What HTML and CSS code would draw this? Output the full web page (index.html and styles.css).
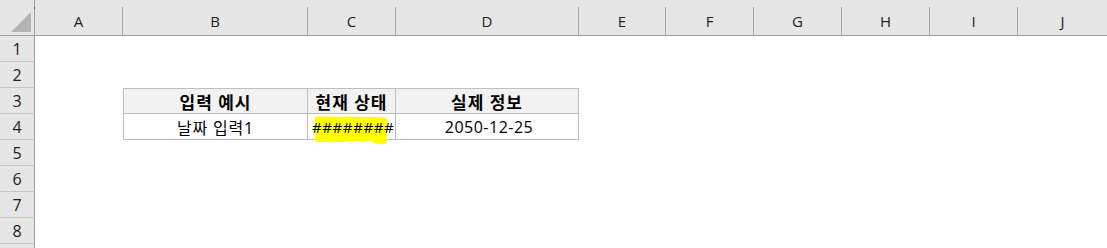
FILE: index.html
```html
<!DOCTYPE html>
<html lang="ko">
<head>
<meta charset="utf-8">
<link rel="stylesheet" href="styles.css">
</head>
<body>
<div class="sheet">
  <div class="corner"><svg class="tri" width="22" height="22" viewBox="0 0 22 22"><polygon points="1,21 21,21 21,1" fill="#b4b4b4"/></svg></div>
  <div class="ch"><span>A</span></div>
  <div class="ch"><span>B</span></div>
  <div class="ch"><span>C</span></div>
  <div class="ch"><span>D</span></div>
  <div class="ch"><span>E</span></div>
  <div class="ch"><span>F</span></div>
  <div class="ch"><span>G</span></div>
  <div class="ch"><span>H</span></div>
  <div class="ch"><span>I</span></div>
  <div class="ch last"><span>J</span></div>

  <div class="rh">1</div><div class="blank row-span"></div>
  <div class="rh">2</div><div class="blank row-span"></div>

  <div class="rh">3</div>
  <div class="blank"></div>
  <div class="cell head first">입력 예시</div>
  <div class="cell head">현재 상태</div>
  <div class="cell head">실제 정보</div>
  <div class="blank rest"></div>

  <div class="rh">4</div>
  <div class="blank"></div>
  <div class="cell first kr">날짜 입력1</div>
  <div class="cell hashcell">
    <svg class="hl" width="80" height="30" viewBox="0 0 80 30"><path d="M4 3 C12 2 22 3 30 3 C38 2 50 3 58 3 C66 3 72 3 76 4 L76 26 C76 29 74 30 70 30 C66 30 62 29 60 27 L38 27 C36 28 34 28 30 28 C24 28 20 29 14 28 C8 28 6 28 4 27 Z" fill="#ffff00"/></svg>
    <span class="hash">########</span>
  </div>
  <div class="cell num">2050-12-25</div>
  <div class="blank rest"></div>

  <div class="rh">5</div><div class="blank row-span"></div>
  <div class="rh">6</div><div class="blank row-span"></div>
  <div class="rh">7</div><div class="blank row-span"></div>
  <div class="rh">8</div><div class="blank row-span"></div>
  <div class="rh"></div><div class="blank row-span"></div>
</div>
</body>
</html>
```

FILE: styles.css
```css
html, body {
  margin: 0;
  padding: 0;
  background: #ffffff;
  overflow: hidden;
}
body {
  font-family: "Open Sans", "Noto Sans CJK KR", sans-serif;
  color: #000000;
}
.sheet {
  display: grid;
  grid-template-columns: 35px 88px 185px 88px 183px 87px 88px 88px 88px 88px 89px;
  grid-template-rows: 36px repeat(9, 26px);
  width: 1107px;
}
.corner {
  background: #e6e6e6;
  border-right: 1px solid #9e9e9e;
  border-bottom: 1px solid #9e9e9e;
  box-sizing: border-box;
  position: relative;
  display: flex;
  align-items: flex-end;
  justify-content: flex-end;
  padding: 0 2px 2px 0;
}
.corner::before {
  content: "";
  position: absolute;
  right: -1px;
  top: 7px;
  width: 1px;
  height: 2px;
  background: #555;
}
.tri { display: block; }
.ch {
  background: #e6e6e6;
  border-bottom: 1px solid #9e9e9e;
  box-sizing: border-box;
  display: flex;
  align-items: flex-end;
}
.ch span {
  flex: 1;
  height: 28px;
  border-right: 1px solid #ababab;
  display: flex;
  align-items: center;
  justify-content: center;
  font-size: 15px;
  color: #222;
}
.ch.last span { border-right: none; }
.rh {
  background: #e6e6e6;
  border-right: 1px solid #9e9e9e;
  border-bottom: 1px solid #c4c4c4;
  box-sizing: border-box;
  display: flex;
  align-items: center;
  justify-content: center;
  font-size: 16px;
  color: #222;
}
.blank { background: #fff; }
.row-span { grid-column: 2 / -1; }
.rest { grid-column: 6 / -1; }
.cell {
  box-sizing: border-box;
  border-right: 1px solid #bfbfbf;
  border-bottom: 1px solid #bfbfbf;
  display: flex;
  align-items: center;
  justify-content: center;
  font-size: 15px;
  background: #fff;
}
.cell.first { border-left: 1px solid #bfbfbf; }
.cell.head {
  background: #f2f2f2;
  border-top: 1px solid #bfbfbf;
  font-weight: 700;
  font-size: 17px;
  letter-spacing: 1px;
}
.cell.kr {
  font-size: 16px;
  letter-spacing: 0.8px;
}
.cell.num {
  font-size: 16px;
  letter-spacing: 0.5px;
  padding-left: 4px;
}
.hashcell {
  position: relative;
  justify-content: flex-start;
}
.hl {
  position: absolute;
  left: 3px;
  top: 0px;
}
.hash {
  position: relative;
  padding-left: 4px;
  letter-spacing: 0.6px;
}
```
